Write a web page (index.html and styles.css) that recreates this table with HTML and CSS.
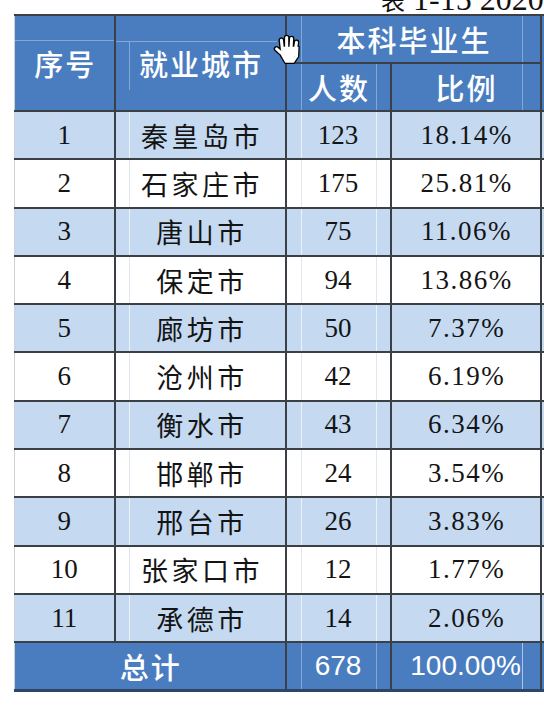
FILE: index.html
```html
<!DOCTYPE html>
<html lang="zh-CN">
<head>
<meta charset="utf-8">
<title>就业城市分布</title>
<link rel="stylesheet" href="styles.css">
</head>
<body>
<div class="title"><span class="title-text"><span class="title-cjk">表</span> 1-15 2020</span></div>
<div class="sheet">
  <table class="grid">
    <colgroup>
      <col class="w-idx"><col class="w-city"><col class="w-num"><col class="w-pct"><col class="w-pad">
    </colgroup>
    <thead>
      <tr class="hr">
        <th rowspan="2" class="h-idx">序号</th>
        <th rowspan="2" class="h-city">就业城市</th>
        <th colspan="2" class="h-group">本科毕业生</th>
        <th rowspan="2" class="pad"></th>
      </tr>
      <tr class="hr">
        <th class="h-num">人数</th>
        <th class="h-pct">比例</th>
      </tr>
    </thead>
    <tbody>
      <tr><td class="idx">1</td><td class="city">秦皇岛市</td><td class="num">123</td><td class="pct">18.14%</td><td class="pad"></td></tr>
      <tr><td class="idx">2</td><td class="city">石家庄市</td><td class="num">175</td><td class="pct">25.81%</td><td class="pad"></td></tr>
      <tr><td class="idx">3</td><td class="city">唐山市</td><td class="num">75</td><td class="pct">11.06%</td><td class="pad"></td></tr>
      <tr><td class="idx">4</td><td class="city">保定市</td><td class="num">94</td><td class="pct">13.86%</td><td class="pad"></td></tr>
      <tr><td class="idx">5</td><td class="city">廊坊市</td><td class="num">50</td><td class="pct">7.37%</td><td class="pad"></td></tr>
      <tr><td class="idx">6</td><td class="city">沧州市</td><td class="num">42</td><td class="pct">6.19%</td><td class="pad"></td></tr>
      <tr><td class="idx">7</td><td class="city">衡水市</td><td class="num">43</td><td class="pct">6.34%</td><td class="pad"></td></tr>
      <tr><td class="idx">8</td><td class="city">邯郸市</td><td class="num">24</td><td class="pct">3.54%</td><td class="pad"></td></tr>
      <tr><td class="idx">9</td><td class="city">邢台市</td><td class="num">26</td><td class="pct">3.83%</td><td class="pad"></td></tr>
      <tr><td class="idx">10</td><td class="city">张家口市</td><td class="num">12</td><td class="pct">1.77%</td><td class="pad"></td></tr>
      <tr><td class="idx">11</td><td class="city">承德市</td><td class="num">14</td><td class="pct">2.06%</td><td class="pad"></td></tr>
    </tbody>
    <tfoot>
      <tr class="total">
        <td colspan="2" class="sum-label">总计</td>
        <td class="sum-num sum-count">678</td>
        <td class="sum-num sum-pct">100.00%</td>
        <td class="pad"></td>
      </tr>
    </tfoot>
  </table>
  <svg class="cursor" viewBox="0 0 32 30" width="35" height="33" aria-hidden="true">
    <g stroke="#000" stroke-linecap="round" stroke-linejoin="round">
      <path d="M9.5 15 L8.6 6.5 M13.4 14 L13.4 4 M17.4 14 L17.9 5 M21.4 15 L22.4 8.5 M11 20.5 L4.2 14.5" fill="none" stroke-width="5.2"/>
      <path d="M8.6 12.5 L24.2 12.5 L23.8 21.5 L20 27 L12.2 27 L8.6 21 Z" fill="#000" stroke-width="2.4"/>
    </g>
    <g stroke="#fff" stroke-linecap="round" stroke-linejoin="round">
      <path d="M9.5 15 L8.6 6.5 M13.4 14 L13.4 4 M17.4 14 L17.9 5 M21.4 15 L22.4 8.5 M11 20.5 L4.2 14.5" fill="none" stroke-width="2.8"/>
      <path d="M8.6 12.5 L24.2 12.5 L23.8 21.5 L20 27 L12.2 27 L8.6 21 Z" fill="#fff" stroke="none"/>
    </g>
  </svg>
</div>
</body>
</html>
```

FILE: styles.css
```css
html, body {
  margin: 0;
  padding: 0;
  overflow: hidden;
  background: #ffffff;
}

body {
  width: 544px;
  height: 716px;
}

.title {
  height: 14px;
  overflow: hidden;
  display: flex;
  align-items: flex-end;
  padding-left: 381px;
  white-space: nowrap;
}

.title-text {
  font-family: "Liberation Serif", "Noto Sans CJK SC", serif;
  font-size: 32px;
  line-height: 1;
  margin-bottom: -1px;
  color: #111111;
}

.title-cjk {
  font-family: "Noto Sans CJK SC", sans-serif;
  font-size: 24px;
}

.sheet {
  position: relative;
}

.grid {
  --blue: #4a7dbf;
  --line: #3b3f46;
  --hl: rgba(255, 255, 255, 0.32);
  border-collapse: collapse;
  table-layout: fixed;
  width: 530px;
  margin-left: 14px;
}

.w-idx { width: 100px; }
.w-city { width: 171px; }
.w-num { width: 105px; }
.w-pct { width: 150px; }
.w-pad { width: 4px; }

.grid th,
.grid td {
  border: 2px solid var(--line);
  padding: 0;
  text-align: center;
  vertical-align: middle;
  background-repeat: no-repeat;
}

.grid th:first-child,
.grid tbody td:first-child,
.grid tfoot td:first-child {
  border-left: 1px solid #cdd2d9;
}

.grid .pad {
  border-right: 0;
}

.grid thead tr { height: 48px; }
.grid tbody tr { height: 48.3px; }
.grid tfoot tr { height: 48px; }

/* header */
.grid th {
  background-color: var(--blue);
  color: #ffffff;
  font-family: "Noto Sans CJK SC", sans-serif;
  font-weight: 500;
  font-size: 29px;
  letter-spacing: 2px;
  text-indent: 2px;
}

.h-idx,
.h-city {
  padding-top: 6px;
}

.h-idx {
  background-image: linear-gradient(var(--hl), var(--hl));
  background-size: 100% 1px;
  background-position: 0 24px;
}

.h-city {
  background-image: linear-gradient(var(--hl), var(--hl)), linear-gradient(var(--hl), var(--hl));
  background-size: calc(100% - 8px) 1px, 1px 48px;
  background-position: 0 25px, 13px 26px;
}

.h-group {
  background-image: linear-gradient(var(--hl), var(--hl)), linear-gradient(var(--hl), var(--hl));
  background-size: 1px 100%, 1px 100%;
  background-position: 14px 0, right 17px top 0;
}

.h-num {
  background-image: linear-gradient(var(--hl), var(--hl)), linear-gradient(var(--hl), var(--hl));
  background-size: 1px 100%, 1px 100%;
  background-position: 14px 0, right 13px top 0;
}

.h-pct {
  background-image: linear-gradient(var(--hl), var(--hl));
  background-size: 1px 100%;
  background-position: right 17px top 0;
}

/* body */
.grid tbody tr {
  --vl: rgba(165, 185, 212, 0.35);
}

.grid tbody tr:nth-child(odd) {
  --vl: rgba(255, 255, 255, 0.65);
}

.grid tbody td {
  background-color: #ffffff;
  color: #141414;
  font-family: "Liberation Serif", serif;
  font-size: 27px;
}

.grid tbody tr:nth-child(odd) td {
  background-color: #c5d9f1;
}

.grid tbody .city {
  font-family: "Noto Sans CJK SC", sans-serif;
  font-size: 27px;
  letter-spacing: 3.5px;
  text-indent: 4px;
  background-image: linear-gradient(var(--vl), var(--vl));
  background-size: 1px 100%;
  background-position: 13px 0;
}

.grid tbody .num {
  background-image: linear-gradient(var(--vl), var(--vl)), linear-gradient(var(--vl), var(--vl));
  background-size: 1px 100%, 1px 100%;
  background-position: 14px 0, right 13px top 0;
}

.grid tbody .pct {
  letter-spacing: 1.5px;
  text-indent: 2px;
}

/* total */
.grid tfoot td {
  background-color: var(--blue);
  color: #ffffff;
  border-bottom: 3px solid #2e4566;
}

.sum-label {
  font-family: "Noto Sans CJK SC", sans-serif;
  font-weight: 500;
  font-size: 29px;
  letter-spacing: 2px;
  text-indent: 2px;
}

.sum-num {
  font-family: "Liberation Sans", Arial, sans-serif;
  font-size: 28px;
}

.sum-count {
  background-image: linear-gradient(var(--hl), var(--hl)), linear-gradient(var(--hl), var(--hl));
  background-size: 1px 100%, 1px 100%;
  background-position: 14px 0, right 13px top 0;
}

.sum-pct {
  background-image: linear-gradient(rgba(255, 255, 255, 0.55), rgba(255, 255, 255, 0.55));
  background-size: 1px 100%;
  background-position: right 17px top 0;
}

.cursor {
  position: absolute;
  left: 272px;
  top: 19px;
}
```
